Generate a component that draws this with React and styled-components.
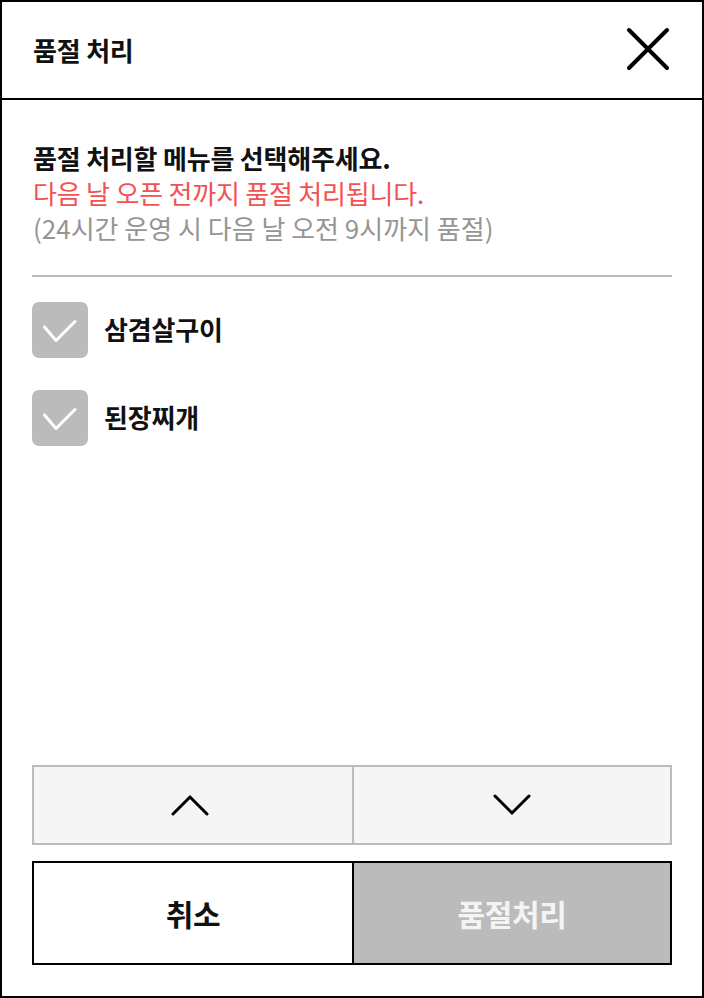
import React, { useState } from "react"
import styled, { createGlobalStyle } from "styled-components"

const GlobalStyle = createGlobalStyle`
  html, body {
    margin: 0;
    padding: 0;
    background: #fff;
  }
  * {
    box-sizing: border-box;
  }
  body {
    font-family: "Noto Sans CJK KR", "Noto Sans", sans-serif;
    color: #111;
  }
`

const Modal = styled.div`
  display: flex;
  flex-direction: column;
  width: 704px;
  height: 998px;
  border: 2px solid #000;
  background: #fff;
`

const Header = styled.header`
  display: flex;
  align-items: center;
  justify-content: space-between;
  height: 98px;
  padding: 0 32px 2px 31px;
  border-bottom: 2px solid #000;
  flex-shrink: 0;
`

const Title = styled.h1`
  margin: 0;
  font-size: 26px;
  font-weight: 700;
  letter-spacing: -0.2px;
`

const CloseButton = styled.button`
  display: flex;
  padding: 0;
  border: none;
  background: none;
  cursor: pointer;
`

const Body = styled.div`
  display: flex;
  flex-direction: column;
  flex: 1;
  padding: 40px 30px 31px;
`

const Notice = styled.p`
  margin: 0;
  padding-left: 1px;
  font-size: 26px;
  line-height: 35px;
  font-weight: ${(p) => (p.$strong ? 700 : 400)};
  color: ${(p) => p.$color || "#111"};
  letter-spacing: ${(p) => p.$spacing || "-0.2px"};
  white-space: nowrap;
`

const Divider = styled.hr`
  margin: 30px 0 25px;
  border: none;
  height: 2px;
  background: #bbb;
`

const MenuList = styled.ul`
  display: flex;
  flex-direction: column;
  gap: 32px;
  margin: 0;
  padding: 0;
  list-style: none;
`

const MenuItem = styled.li`
  display: flex;
  align-items: center;
  gap: 16px;
  height: 56px;
  cursor: pointer;
`

const CheckBox = styled.span`
  display: flex;
  align-items: center;
  justify-content: center;
  width: 56px;
  height: 56px;
  border-radius: 7px;
  background: ${(p) => (p.$checked ? "#333" : "#bbb")};
`

const MenuLabel = styled.span`
  font-size: 26px;
  font-weight: 700;
  letter-spacing: -0.2px;
  padding-bottom: 3px;
`

const Spacer = styled.div`
  flex: 1;
`

const Pager = styled.div`
  display: grid;
  grid-template-columns: 1fr 1fr;
  height: 80px;
  border: 2px solid #bbb;
  background: #f5f5f5;
`

const PagerButton = styled.button`
  display: flex;
  align-items: center;
  justify-content: center;
  padding: 0 ${(p) => (p.$divided ? "0" : "6px")} 0 0;
  border: none;
  border-left: ${(p) => (p.$divided ? "2px solid #bbb" : "none")};
  background: none;
  cursor: pointer;
`

const Actions = styled.div`
  display: grid;
  grid-template-columns: 1fr 1fr;
  height: 104px;
  margin-top: 16px;
  border: 2px solid #000;
`

const ActionButton = styled.button`
  display: flex;
  align-items: center;
  justify-content: center;
  padding: 0;
  border: none;
  border-left: ${(p) => (p.$primary ? "2px solid #000" : "none")};
  background: ${(p) => (p.$primary ? "#bbb" : "#fff")};
  color: ${(p) => (p.$primary ? "#f4f4f4" : "#111")};
  font-family: inherit;
  font-size: 30px;
  font-weight: 700;
  letter-spacing: -0.3px;
  cursor: pointer;
`

const CloseIcon = () => (
  <svg width="44" height="44" viewBox="0 0 44 44" fill="none">
    <path d="M3 3L41 41M41 3L3 41" stroke="#000" strokeWidth="4" strokeLinecap="round" />
  </svg>
)

const CheckIcon = () => (
  <svg width="56" height="56" viewBox="0 0 56 56" fill="none">
    <path
      d="M12.5 25L24 38.5L43 19.5"
      stroke="#fff"
      strokeWidth="3"
      strokeLinecap="round"
      strokeLinejoin="round"
    />
  </svg>
)

const Chevron = ({ up }) => (
  <svg width="38" height="24" viewBox="0 0 38 24" fill="none">
    <path
      d={up ? "M2 21L19 4L36 21" : "M2 3L19 20L36 3"}
      stroke="#000"
      strokeWidth="3"
      strokeLinecap="round"
      strokeLinejoin="miter"
    />
  </svg>
)

const menus = ["삼겸살구이", "된장찌개"]

export default function App() {
  const [checked, setChecked] = useState([])

  const toggle = (name) =>
    setChecked((prev) =>
      prev.includes(name) ? prev.filter((n) => n !== name) : [...prev, name]
    )

  return (
    <>
      <GlobalStyle />
      <Modal>
        <Header>
          <Title>품절 처리</Title>
          <CloseButton aria-label="닫기">
            <CloseIcon />
          </CloseButton>
        </Header>
        <Body>
          <Notice $strong>품절 처리할 메뉴를 선택해주세요.</Notice>
          <Notice $color="#f25252">다음 날 오픈 전까지 품절 처리됩니다.</Notice>
          <Notice $color="#959595" $spacing="0">
            (24시간 운영 시 다음 날 오전 9시까지 품절)
          </Notice>
          <Divider />
          <MenuList>
            {menus.map((name) => (
              <MenuItem key={name} onClick={() => toggle(name)}>
                <CheckBox $checked={checked.includes(name)}>
                  <CheckIcon />
                </CheckBox>
                <MenuLabel>{name}</MenuLabel>
              </MenuItem>
            ))}
          </MenuList>
          <Spacer />
          <Pager>
            <PagerButton aria-label="위로">
              <Chevron up />
            </PagerButton>
            <PagerButton $divided aria-label="아래로">
              <Chevron />
            </PagerButton>
          </Pager>
          <Actions>
            <ActionButton>취소</ActionButton>
            <ActionButton $primary>품절처리</ActionButton>
          </Actions>
        </Body>
      </Modal>
    </>
  )
}
